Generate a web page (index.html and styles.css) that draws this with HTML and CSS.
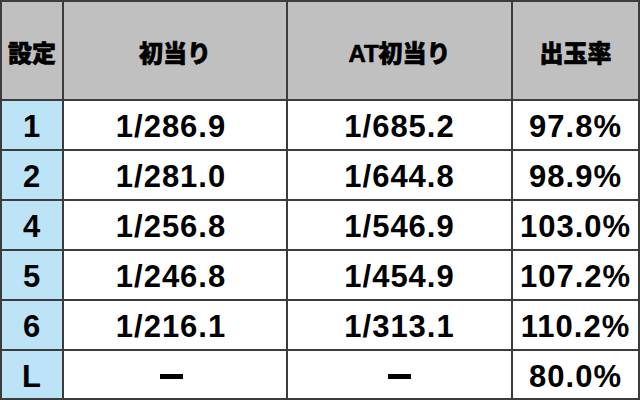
FILE: index.html
```html
<!DOCTYPE html>
<html lang="ja">
<head>
<meta charset="utf-8">
<link rel="stylesheet" href="styles.css">
</head>
<body>
<div class="table">
  <div class="cell head">設定</div>
  <div class="cell head">初当り</div>
  <div class="cell head">AT初当り</div>
  <div class="cell head">出玉率</div>

  <div class="cell key">1</div>
  <div class="cell first">1/286.9</div>
  <div class="cell">1/685.2</div>
  <div class="cell">97.8%</div>

  <div class="cell key">2</div>
  <div class="cell first">1/281.0</div>
  <div class="cell">1/644.8</div>
  <div class="cell">98.9%</div>

  <div class="cell key">4</div>
  <div class="cell first">1/256.8</div>
  <div class="cell">1/546.9</div>
  <div class="cell">103.0%</div>

  <div class="cell key">5</div>
  <div class="cell first">1/246.8</div>
  <div class="cell">1/454.9</div>
  <div class="cell">107.2%</div>

  <div class="cell key">6</div>
  <div class="cell first">1/216.1</div>
  <div class="cell">1/313.1</div>
  <div class="cell">110.2%</div>

  <div class="cell key">L</div>
  <div class="cell first"><span class="dash"></span></div>
  <div class="cell"><span class="dash"></span></div>
  <div class="cell">80.0%</div>
</div>
</body>
</html>
```

FILE: styles.css
```css
html, body {
  margin: 0;
  padding: 0;
  background: #ffffff;
}

.table {
  width: 640px;
  height: 400px;
  box-sizing: border-box;
  padding: 2px;
  background: #3c3c3c;
  display: grid;
  grid-template-columns: 60px 222px 223px 125px;
  grid-template-rows: 97px repeat(5, 48px) 47px;
  gap: 2px;
}

.cell {
  background: #ffffff;
  display: flex;
  align-items: center;
  justify-content: center;
  font-family: "Liberation Sans", Arial, "Noto Sans CJK JP", sans-serif;
  font-weight: 700;
  font-size: 31px;
  color: #000000;
  letter-spacing: 1px;
  padding-top: 4px;
  box-sizing: border-box;
}

.first {
  padding-right: 8px;
}

.head {
  background: #c0c0c0;
  font-family: "Liberation Sans", "Noto Sans CJK JP", sans-serif;
  font-weight: 900;
  font-size: 24px;
  letter-spacing: 0;
  padding-top: 2px;
  -webkit-text-stroke: 0.6px #000000;
}

.key {
  background: #bde3f7;
}

.dash {
  display: block;
  width: 23px;
  height: 5px;
  background: #000000;
}
```
